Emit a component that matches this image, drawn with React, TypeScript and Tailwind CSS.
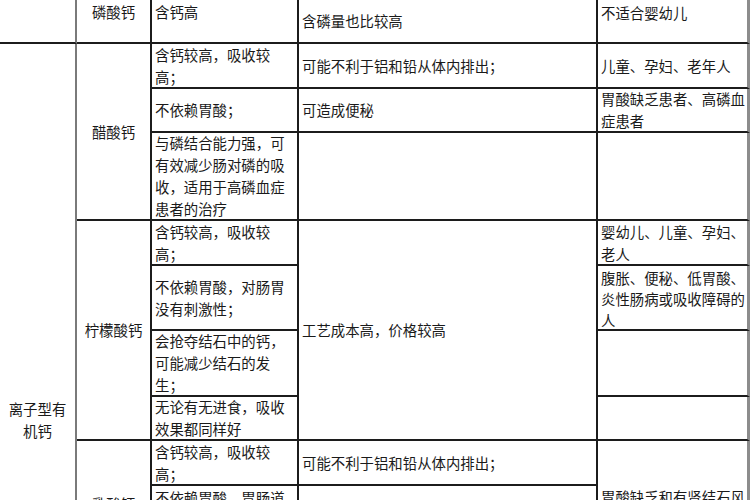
import React from "react";

type CellProps = {
  className?: string;
  lines?: string[];
  last?: boolean;
};

const Cell = ({ className = "", lines = [], last = false }: CellProps) => {
  return (
    <div
      className={`flex flex-col border-b-2 border-[#1c1c1c] ${
        last ? "border-r-[3px] border-r-[#8c8c8c]" : "border-r-2"
      } ${className}`}
    >
      {lines.map((line, i) => (
        <span key={i} className="block whitespace-nowrap">
          {line}
        </span>
      ))}
    </div>
  );
};

const App = () => {
  return (
    <div
      className="h-[500px] w-[750px] overflow-hidden bg-white text-[14.4px] leading-[22px] text-[#1a1a1a]"
      style={{ fontFamily: '"Noto Sans CJK SC", "Noto Sans", sans-serif' }}
    >
      <div className="grid grid-cols-[77px_75px_147px_299px_152px] grid-rows-[44px_45px_44px_88px_45px_65px_66px_44px_45px_66px_244px]">
        {/* column 1 */}
        <div className="col-start-1 row-start-1 border-b-2 border-r-2 border-b-[#1c1c1c] border-r-[#7a7a7a]" />
        <div className="col-start-1 row-start-2 row-span-10 flex flex-col items-center justify-center border-r-2 border-r-[#7a7a7a]">
          <span>离子型有</span>
          <span>机钙</span>
        </div>

        {/* column 2 */}
        <Cell className="col-start-2 row-start-1 items-center pt-[1px]" lines={["磷酸钙"]} />
        <Cell className="col-start-2 row-start-2 row-span-3 items-center justify-center" lines={["醋酸钙"]} />
        <Cell className="col-start-2 row-start-5 row-span-4 items-center justify-center" lines={["柠檬酸钙"]} />
        <Cell className="col-start-2 row-start-9 row-span-3 items-center pt-[52px]" lines={["乳酸钙"]} />

        {/* column 3 */}
        <Cell className="col-start-3 row-start-1 pl-[3px] pt-[1px]" lines={["含钙高"]} />
        <Cell className="col-start-3 row-start-2 justify-center pl-[3px]" lines={["含钙较高，吸收较", "高；"]} />
        <Cell className="col-start-3 row-start-3 justify-center pl-[3px]" lines={["不依赖胃酸；"]} />
        <Cell
          className="col-start-3 row-start-4 justify-center pl-[3px]"
          lines={["与磷结合能力强，可", "有效减少肠对磷的吸", "收，适用于高磷血症", "患者的治疗"]}
        />
        <Cell className="col-start-3 row-start-5 justify-center pl-[3px]" lines={["含钙较高，吸收较", "高；"]} />
        <Cell className="col-start-3 row-start-6 justify-center pl-[3px]" lines={["不依赖胃酸，对肠胃", "没有刺激性；"]} />
        <Cell
          className="col-start-3 row-start-7 justify-center pl-[3px]"
          lines={["会抢夺结石中的钙，", "可能减少结石的发", "生；"]}
        />
        <Cell className="col-start-3 row-start-8 justify-center pl-[3px]" lines={["无论有无进食，吸收", "效果都同样好"]} />
        <Cell className="col-start-3 row-start-9 justify-center pl-[3px]" lines={["含钙较高，吸收较", "高；"]} />
        <Cell className="col-start-3 row-start-10 pl-[3px] pt-[1px]" lines={["不依赖胃酸，胃肠道", "刺激性小；"]} />
        <Cell className="col-start-3 row-start-11" />

        {/* column 4 */}
        <Cell className="col-start-4 row-start-1 justify-center pl-[3px]" lines={["含磷量也比较高"]} />
        <Cell className="col-start-4 row-start-2 justify-center pl-[3px]" lines={["可能不利于铝和铅从体内排出；"]} />
        <Cell className="col-start-4 row-start-3 justify-center pl-[3px]" lines={["可造成便秘"]} />
        <Cell className="col-start-4 row-start-4" />
        <Cell className="col-start-4 row-start-5 row-span-4 justify-center pl-[3px]" lines={["工艺成本高，价格较高"]} />
        <Cell className="col-start-4 row-start-9 justify-center pl-[3px]" lines={["可能不利于铝和铅从体内排出；"]} />
        <Cell className="col-start-4 row-start-10 row-span-2" />

        {/* column 5 */}
        <Cell last className="col-start-5 row-start-1 pl-[3px] pt-[2px]" lines={["不适合婴幼儿"]} />
        <Cell last className="col-start-5 row-start-2 justify-center pl-[3px]" lines={["儿童、孕妇、老年人"]} />
        <Cell last className="col-start-5 row-start-3 justify-center pl-[3px]" lines={["胃酸缺乏患者、高磷血", "症患者"]} />
        <Cell last className="col-start-5 row-start-4" />
        <Cell last className="col-start-5 row-start-5 justify-center pl-[3px]" lines={["婴幼儿、儿童、孕妇、", "老人"]} />
        <Cell
          last
          className="col-start-5 row-start-6 pl-[3px] pt-[1px] leading-[21px]"
          lines={["腹胀、便秘、低胃酸、", "炎性肠病或吸收障碍的", "人"]}
        />
        <Cell last className="col-start-5 row-start-7" />
        <Cell last className="col-start-5 row-start-8" />
        <Cell
          last
          className="col-start-5 row-start-9 row-span-3 pl-[3px] pt-[45px]"
          lines={["胃酸缺乏和有肾结石风", "险的人"]}
        />
      </div>
    </div>
  );
};

export default App;
